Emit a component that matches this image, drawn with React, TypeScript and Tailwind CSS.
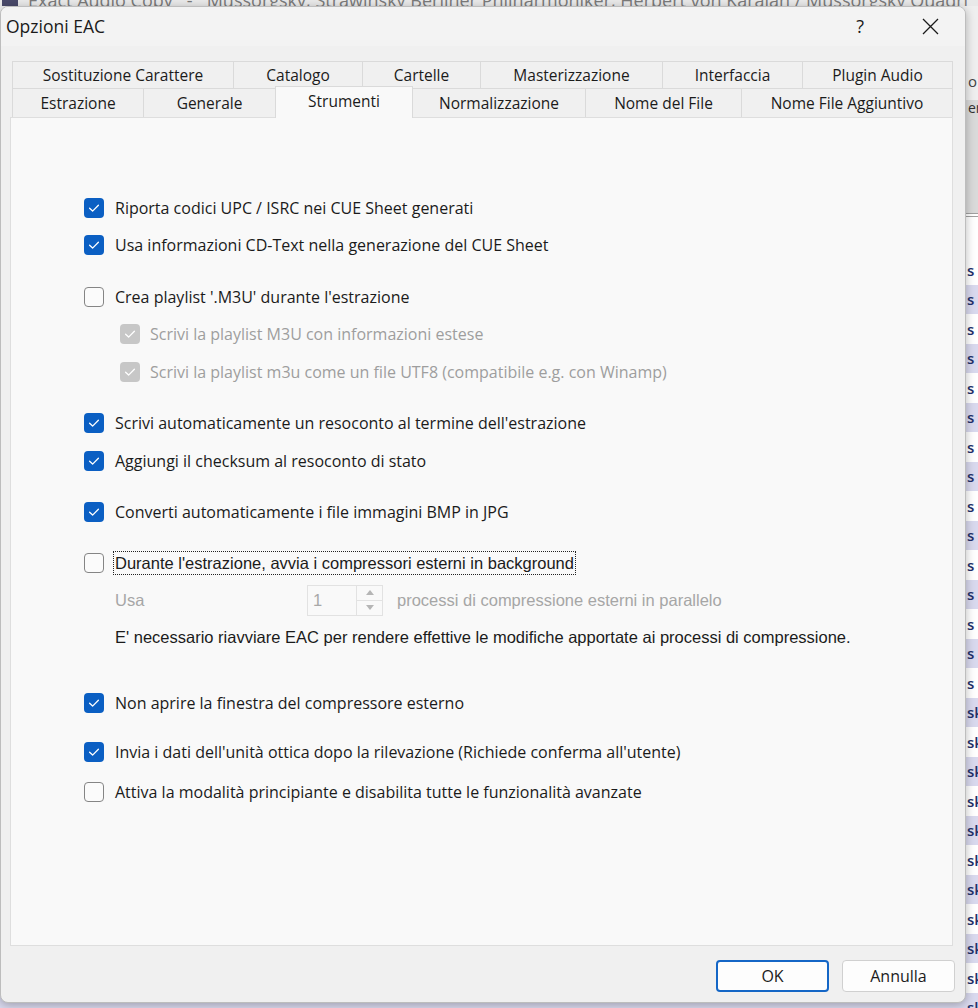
import React from "react";

type BoxState = "on" | "off" | "dis";

function CheckMark() {
  return (
    <svg width="12" height="10" viewBox="0 0 12 10" fill="none">
      <path d="M1.6 5.3 L4.6 8.1 L10.4 2.2" stroke="white" strokeWidth="1.3" strokeLinecap="round" strokeLinejoin="round" />
    </svg>
  );
}

function Box({ state }: { state: BoxState }) {
  if (state === "on")
    return (
      <span className="flex h-5 w-5 shrink-0 items-center justify-center rounded-[4px] bg-[#0b5fc3]">
        <CheckMark />
      </span>
    );
  if (state === "dis")
    return (
      <span className="flex h-5 w-5 shrink-0 items-center justify-center rounded-[4px] bg-[#c7c7c7]">
        <CheckMark />
      </span>
    );
  return <span className="h-5 w-5 shrink-0 rounded-[4px] border border-[#858585] bg-[#fbfbfb]" />;
}

function Row({ mt, state, label, sub }: { mt: string; state: BoxState; label: string; sub?: boolean }) {
  return (
    <div className={`${mt} ${sub ? "ml-[109px] gap-[10px]" : "ml-[73px] gap-[11px]"} flex h-[30px] items-center`}>
      <Box state={state} />
      <span className={sub ? "text-[#9e9e9e]" : "text-[#1b1b1b]"}>{label}</span>
    </div>
  );
}

const row1 = [
  { t: "Sostituzione Carattere", w: "w-[221px]" },
  { t: "Catalogo", w: "w-[129px]" },
  { t: "Cartelle", w: "w-[118px]" },
  { t: "Masterizzazione", w: "w-[182px]" },
  { t: "Interfaccia", w: "w-[140px]" },
  { t: "Plugin Audio", w: "flex-1" },
];
const row2 = [
  { t: "Estrazione", w: "w-[131px]" },
  { t: "Generale", w: "w-[132px]" },
  { t: "Strumenti", w: "w-[138px]", sel: true },
  { t: "Normalizzazione", w: "w-[172px]" },
  { t: "Nome del File", w: "w-[156px]" },
  { t: "Nome File Aggiuntivo", w: "flex-1" },
];

function BgRows() {
  const rows = [];
  for (let i = 0; i < 26; i++) {
    const y = 255 + i * 29.5;
    rows.push(
      <div
        key={i}
        className={`flex h-[29.5px] shrink-0 items-center ${i % 2 === 1 ? "bg-[#d9d9ee]" : "bg-white"}`}
      >
        <div className="w-[967px] shrink-0" />
        <span className="text-[15px] font-semibold text-[#22306a]">{y < 690 ? "s" : "sk"}</span>
      </div>
    );
  }
  return <>{rows}</>;
}

export default function App() {
  return (
    <div className="relative h-[1008px] w-[978px] overflow-hidden bg-white font-['Open_Sans',sans-serif]">
      {/* background application window */}
      <div className="flex h-full w-full flex-col">
        <div className="h-[6px] shrink-0 overflow-hidden bg-[#e9e9e9]">
          <div className="-mt-[10px] flex items-center gap-[10px] whitespace-nowrap text-[18px] leading-[20px] text-[#7a7a7a]">
            <span className="ml-[2px] h-[16px] w-[16px] bg-[#4a4a6a]" />
            <span>Exact Audio Copy&nbsp;&nbsp;&nbsp;-&nbsp;&nbsp;&nbsp;Mussorgsky, Strawinsky Berliner Philharmoniker, Herbert von Karajan / Mussorgsky Quadri</span>
          </div>
        </div>
        <div className="flex h-[94px] shrink-0 flex-col bg-[#efefef]">
          <div className="ml-[968px] mt-[66px] text-[15px] leading-[18px] text-[#444]">o</div>
        </div>
        <div className="flex h-[113px] shrink-0 flex-col bg-[#dadada]">
          <div className="ml-[968px] text-[14px] leading-[16px] text-[#333]">er</div>
        </div>
        <div className="h-[4px] shrink-0 border-y border-[#a0a0a0] bg-white" />
        <div className="h-[38px] shrink-0 bg-white" />
        <BgRows />
      </div>

      {/* dialog window */}
      <div className="absolute left-0 top-[6px] flex h-[997px] w-[966px] flex-col overflow-hidden rounded-[8px] border border-[#bdbdbd] bg-[#f0f0f0] shadow-[0_2px_10px_rgba(0,0,0,0.28)]">
        {/* title bar */}
        <div className="flex h-[39px] shrink-0 items-center bg-[#f3f3f3] pl-[5px]">
          <span className="text-[17.5px] text-[#1a1a1a]">Opzioni EAC</span>
          <span className="ml-auto mr-[58px] text-[18px] text-[#1a1a1a]">?</span>
          <svg className="mr-[26px]" width="17" height="17" viewBox="0 0 17 17">
            <path d="M1 1 L16 16 M16 1 L1 16" stroke="#1a1a1a" strokeWidth="1.3" />
          </svg>
        </div>

        {/* body */}
        <div className="flex flex-1 flex-col pl-[9px] pr-[12px] pt-[15px]">
          {/* tabs */}
          <div className="ml-[2px] flex h-[27px] text-[15.5px] text-[#1b1b1b]">
            {row1.map((t, i) => (
              <div
                key={t.t}
                className={`${t.w} flex items-center justify-center border-l border-t border-[#dadada] pt-[1px] ${i === row1.length - 1 ? "border-r" : ""}`}
              >
                {t.t}
              </div>
            ))}
          </div>
          <div className="relative z-10 ml-[2px] flex h-[29px] text-[15.5px] text-[#1b1b1b]">
            {row2.map((t, i) =>
              t.sel ? (
                <div
                  key={t.t}
                  className={`${t.w} -mt-[2px] flex h-[32px] items-start justify-center border-x border-t border-[#dadada] bg-[#f9f9f9] pt-[3px]`}
                >
                  {t.t}
                </div>
              ) : (
                <div
                  key={t.t}
                  className={`${t.w} flex items-center justify-center border-t border-[#dadada] pt-[1px] ${i === 0 ? "border-l" : ""} ${i === row2.length - 1 ? "border-r" : ""} ${row2[i - 1]?.sel ? "" : i > 0 ? "border-l" : ""}`}
                >
                  {t.t}
                </div>
              )
            )}
          </div>

          {/* panel */}
          <div className="flex h-[829px] shrink-0 flex-col border border-[#dedede] bg-[#f9f9f9] text-[16px]">
            <Row mt="mt-[75px]" state="on" label="Riporta codici UPC / ISRC nei CUE Sheet generati" />
            <Row mt="mt-[7px]" state="on" label="Usa informazioni CD-Text nella generazione del CUE Sheet" />
            <Row mt="mt-[22px]" state="off" label="Crea playlist '.M3U' durante l'estrazione" />
            <Row mt="mt-[7px]" state="dis" sub label="Scrivi la playlist M3U con informazioni estese" />
            <Row mt="mt-[8px]" state="dis" sub label="Scrivi la playlist m3u come un file UTF8 (compatibile e.g. con Winamp)" />
            <Row mt="mt-[21px]" state="on" label="Scrivi automaticamente un resoconto al termine dell'estrazione" />
            <Row mt="mt-[8px]" state="on" label="Aggiungi il checksum al resoconto di stato" />
            <Row mt="mt-[21px]" state="on" label="Converti automaticamente i file immagini BMP in JPG" />

            <div className="ml-[73px] mt-[21px] flex h-[30px] items-center gap-[9px] font-['Liberation_Sans',sans-serif] text-[16.5px]">
              <Box state="off" />
              <span className="flex h-[24px] items-center border border-dotted border-[#222] px-[1px] text-[#1b1b1b]">
                Durante l'estrazione, avvia i compressori esterni in background
              </span>
            </div>

            <div className="ml-[104px] mt-[7px] flex h-[30px] items-center font-['Liberation_Sans',sans-serif] text-[16.5px] text-[#a6a6a6]">
              <span className="w-[192px]">Usa</span>
              <div className="flex h-[31px] w-[76px] items-stretch border border-[#e2e2e2] bg-[#f9f9f9]">
                <span className="flex flex-1 items-center pl-[5px] text-[#a8a8a8]">1</span>
                <div className="flex w-[26px] flex-col border-l border-[#e2e2e2]">
                  <div className="flex flex-1 items-center justify-center border-b border-[#e2e2e2]">
                    <svg width="8" height="5" viewBox="0 0 8 5"><path d="M0 5 L4 0 L8 5 Z" fill="#b5b5b5" /></svg>
                  </div>
                  <div className="flex flex-1 items-center justify-center">
                    <svg width="8" height="5" viewBox="0 0 8 5"><path d="M0 0 L4 5 L8 0 Z" fill="#b5b5b5" /></svg>
                  </div>
                </div>
              </div>
              <span className="ml-[14px]">processi di compressione esterni in parallelo</span>
            </div>

            <div className="ml-[104px] mt-[7px] flex h-[30px] items-center font-['Liberation_Sans',sans-serif] text-[16.5px] text-[#1b1b1b]">
              E' necessario riavviare EAC per rendere effettive le modifiche apportate ai processi di compressione.
            </div>

            <Row mt="mt-[36px]" state="on" label="Non aprire la finestra del compressore esterno" />
            <Row mt="mt-[19px]" state="on" label="Invia i dati dell'unità ottica dopo la rilevazione (Richiede conferma all'utente)" />
            <Row mt="mt-[10px]" state="off" label="Attiva la modalità principiante e disabilita tutte le funzionalità avanzate" />
          </div>

          {/* buttons */}
          <div className="-mr-[2px] mt-[14px] flex justify-end gap-[13px] text-[16px] text-[#1b1b1b]">
            <button className="flex h-[32px] w-[113px] items-center justify-center rounded-[4px] border-2 border-[#1466c6] bg-[#fdfdfd]">
              OK
            </button>
            <button className="flex h-[32px] w-[113px] items-center justify-center rounded-[4px] border border-[#d0d0d0] bg-[#fdfdfd]">
              Annulla
            </button>
          </div>
        </div>
      </div>
    </div>
  );
}
